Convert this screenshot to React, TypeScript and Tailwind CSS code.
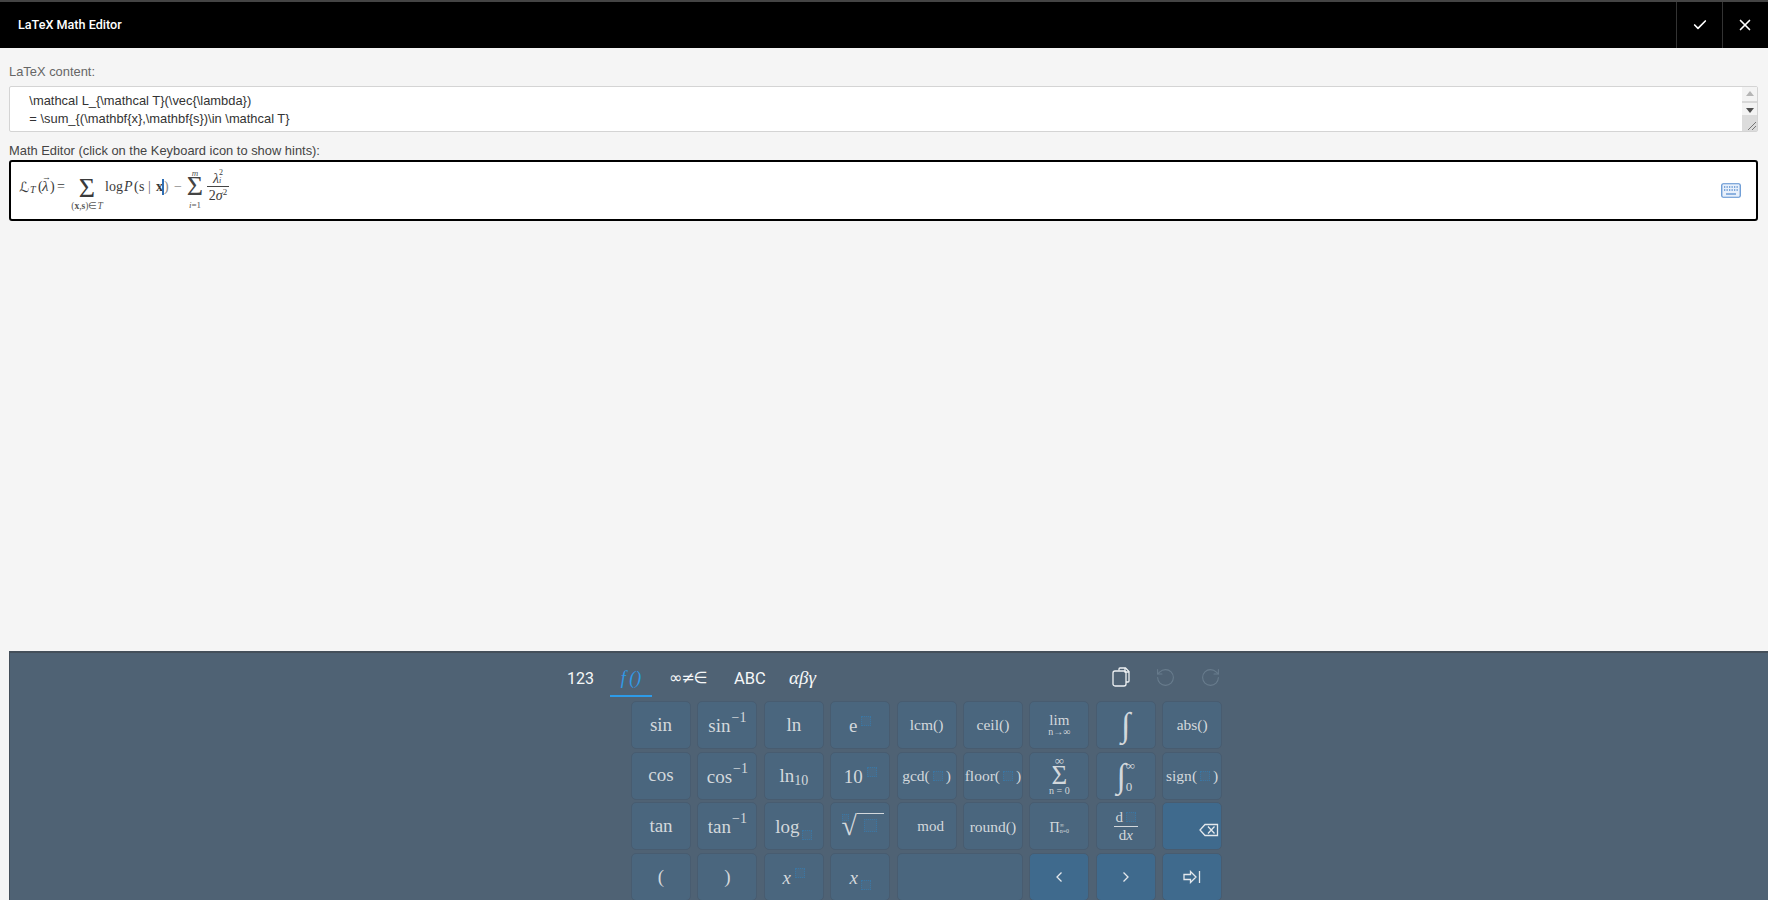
import React from "react";
import { Check, X, RotateCcw, RotateCw } from "lucide-react";

const Ph = ({ s = 10 }: { s?: number }) => (
  <span
    className="inline-block border border-dotted border-[#3a76a3] bg-[#4a6a85]"
    style={{ width: s, height: s }}
  />
);

const Key = ({ children, action, cls = "" }: { children?: React.ReactNode; action?: boolean; cls?: string }) => (
  <div
    className={`flex h-[48px] items-center justify-center rounded-[5px] border border-[#485c70] text-[#d3d8dc] ${
      action ? "bg-[#3f6a8d]" : "bg-[#4a667e]"
    } ${cls}`}
  >
    {children}
  </div>
);

const Pow = ({ base, sup }: { base: React.ReactNode; sup: React.ReactNode }) => (
  <span className="flex items-start text-[19px] leading-none">
    <span className="mt-[1px]">{base}</span>
    <span className="-mt-[4px] ml-[1px] text-[14px]">{sup}</span>
  </span>
);

const Fn = ({ name }: { name: string }) => (
  <span className="flex items-center text-[15.500px] leading-none">
    {name}(
    <span className="mx-[3px] flex">
      <Ph />
    </span>
    )
  </span>
);

const T = ({ children }: { children: React.ReactNode }) => <span className="-translate-y-[1px] text-[19px] leading-none">{children}</span>;
const S = ({ children }: { children: React.ReactNode }) => <span className="text-[15.500px] leading-none">{children}</span>;

function Keyboard() {
  return (
    <div className="mt-auto ml-[9px] h-[249px] shrink-0 overflow-hidden border-t-2 border-l border-[#444f5a] bg-[#4f6274] pl-[557px]">
      <div className="w-[655px]">
        <div className="flex h-[48px] items-center text-[#f5f7f8]">
          <span className="mt-[4px] w-[43px] font-['Roboto',sans-serif] text-[16px]">123</span>
          <span className="relative mt-[2px] flex h-[37px] w-[42px] items-center justify-center font-['Liberation_Serif',serif] text-[18px] italic text-[#2f9ae8]">
            f&thinsp;()
            <span className="absolute bottom-0 left-0 h-[2px] w-full bg-[#2d9be8]" />
          </span>
          <span className="ml-[17px] mt-[2px] w-[65px] font-['DejaVu_Sans',sans-serif] text-[16px] tracking-[-1px]">∞≠∈</span>
          <span className="mt-[4px] w-[55px] font-['Roboto',sans-serif] text-[16.500px]">ABC</span>
          <span className="mt-[2px] font-['Liberation_Serif',serif] text-[19px] italic">αβγ</span>
          <div className="ml-auto flex items-center gap-[24px] pr-[1px]">
            <svg width="20" height="20" viewBox="0 0 20 20" fill="none" stroke="#eef1f3" strokeWidth="1.3">
              <path d="M8 3.500V2a1 1 0 0 1 1-1h5.500l3.500 3.500V14a1 1 0 0 1-1 1h-2" />
              <path d="M14 1v4h4" />
              <rect x="2" y="4" width="13" height="15" rx="2" />
            </svg>
            <RotateCcw size={21} strokeWidth={1.2} className="text-[#687c8d]" />
            <RotateCw size={21} strokeWidth={1.2} className="text-[#687c8d]" />
          </div>
        </div>
        <div className="ml-[64px] grid grid-cols-[repeat(9,60px)] gap-x-[6.400px] gap-y-[2.700px] font-['Liberation_Serif',serif]">
          <Key><T>sin</T></Key>
          <Key><Pow base="sin" sup="−1" /></Key>
          <Key><T>ln</T></Key>
          <Key><Pow base={<span className="mr-[3px]">e</span>} sup={<span className="mt-[5px] flex"><Ph /></span>} /></Key>
          <Key><S>lcm()</S></Key>
          <Key><S>ceil()</S></Key>
          <Key>
            <span className="flex flex-col items-center leading-none">
              <span className="text-[15px] leading-[13px]">lim</span>
              <span className="text-[10px] leading-[10px]">n→∞</span>
            </span>
          </Key>
          <Key><span className="text-[34px] italic leading-none">∫</span></Key>
          <Key><S>abs()</S></Key>

          <Key><T>cos</T></Key>
          <Key><Pow base="cos" sup="−1" /></Key>
          <Key>
            <span className="flex items-end text-[19px] leading-none">
              ln<span className="translate-y-[2px] text-[14px] leading-[12px]">10</span>
            </span>
          </Key>
          <Key><Pow base={<span className="mr-[3px]">10</span>} sup={<span className="mt-[5px] flex"><Ph /></span>} /></Key>
          <Key><Fn name="gcd" /></Key>
          <Key><Fn name="floor" /></Key>
          <Key>
            <span className="flex flex-col items-center leading-none">
              <span className="text-[13px] leading-[9px]">∞</span>
              <span className="mt-[1px] text-[27px] leading-[18px]">Σ</span>
              <span className="mt-[2px] text-[10px] leading-[10px]">n = 0</span>
            </span>
          </Key>
          <Key>
            <span className="flex items-center">
              <span className="text-[34px] italic leading-none">∫</span>
              <span className="flex h-[34px] flex-col justify-between text-[13px] leading-none">
                <span>∞</span>
                <span>0</span>
              </span>
            </span>
          </Key>
          <Key><Fn name="sign" /></Key>

          <Key><T>tan</T></Key>
          <Key><Pow base="tan" sup="−1" /></Key>
          <Key>
            <span className="flex items-end text-[19px] leading-none">
              log
              <span className="ml-[3px] flex translate-y-[4px]"><Ph /></span>
            </span>
          </Key>
          <Key>
            <span className="ml-[6px] flex items-start leading-none">
              <span className="mr-[-8px] mt-[2px] flex"><Ph s={7} /></span>
              <span className="text-[28px] leading-[28px]">√</span>
              <span className="mt-[1px] flex w-[27px] justify-center border-t border-[#d3d8dc] pt-[5px]">
                <Ph s={13} />
              </span>
            </span>
          </Key>
          <Key><span className="ml-[8px] text-[15px] leading-none">mod</span></Key>
          <Key><S>round()</S></Key>
          <Key>
            <span className="mt-[4px] flex items-center text-[14px] leading-none">
              Π<span className="flex flex-col text-[6px] leading-[6px]"><span>∞</span><span>n=0</span></span>
            </span>
          </Key>
          <Key>
            <span className="flex flex-col items-center leading-none">
              <span className="flex items-center gap-[3px] text-[15px] leading-[17px]">d<Ph /></span>
              <span className="w-[24px] border-t border-[#d3d8dc]" />
              <span className="text-[15px] leading-[17px]">d<i>x</i></span>
            </span>
          </Key>
          <Key action>
            <svg className="ml-[34px] mt-[7px]" width="20" height="14" viewBox="0 0 20 14" fill="none" stroke="#e4e8ec" strokeWidth="1.3">
              <path d="M6 1.500h12.500v11H6L1 7z" />
              <path d="M9 3.500l6.500 7M15.500 3.500l-6.500 7" />
            </svg>
          </Key>

          <Key><T>(</T></Key>
          <Key><T>)</T></Key>
          <Key><Pow base={<i className="mr-[3px]">x</i>} sup={<span className="mt-[5px] flex"><Ph /></span>} /></Key>
          <Key>
            <span className="flex items-end text-[19px] leading-none">
              <i>x</i>
              <span className="ml-[3px] flex translate-y-[3px]"><Ph /></span>
            </span>
          </Key>
          <Key cls="col-span-2" />
          <Key action>
            <svg width="10" height="12" viewBox="0 0 10 12" fill="none" stroke="#e4e8ec" strokeWidth="1.3"><path d="M7.500 1.500L3 6l4.500 4.500" /></svg>
          </Key>
          <Key action>
            <svg width="10" height="12" viewBox="0 0 10 12" fill="none" stroke="#e4e8ec" strokeWidth="1.3"><path d="M2.500 1.500L7 6l-4.500 4.500" /></svg>
          </Key>
          <Key action>
            <svg width="18" height="14" viewBox="0 0 18 14" fill="none" stroke="#e4e8ec" strokeWidth="1.300">
              <path d="M1 4.500h6.500V1.500L13 7l-5.500 5.500v-3H1z" />
              <path d="M16.500 1v12" />
            </svg>
          </Key>
        </div>
      </div>
    </div>
  );
}

function Formula() {
  return (
    <div className="-mt-[8px] flex items-center whitespace-nowrap font-['Liberation_Serif',serif] text-[14px] leading-none text-[#3a3a3a]">
      <span className="w-[11px] font-['DejaVu_Sans',sans-serif] text-[14px]">ℒ</span>
      <i className="mt-[6px] w-[8px] text-[10px]">T</i>
      <span className="w-[4px]">(</span>
      <i className="relative w-[8px] text-[15px]">
        λ<span className="absolute left-0 top-[-6px] text-[9px] not-italic">→</span>
      </i>
      <span className="w-[5px]">)</span>
      <span className="ml-[2px] w-[10px]">=</span>
      <span className="ml-[3.500px] mt-[16px] flex w-[33px] flex-col items-center">
        <span className="text-[28px] leading-[18px]">Σ</span>
        <span className="mt-[4px] text-[9.500px] leading-[10px] text-[#555]">
          (<b>x</b>,<b>s</b>)∈<i>T</i>
        </span>
      </span>
      <span className="ml-[1.500px] w-[19px]">log</span>
      <i className="w-[10px]">P</i>
      <span className="w-[5px]">(</span>
      <span className="w-[6px]">s</span>
      <span className="w-[9px] text-center text-[#666]">|</span>
      <b className="relative ml-[2px] w-[8px]">
        x<span className="absolute right-0 top-[-1px] h-[16px] w-[2px] bg-[#2f6fb5]" />
      </b>
      <span className="w-[5px] text-[#888]">)</span>
      <span className="ml-[5px] w-[8px] text-[#888]">−</span>
      <span className="ml-[3px] mt-[5px] flex w-[20px] flex-col items-center">
        <i className="text-[9px] leading-[8px] text-[#555]">m</i>
        <span className="text-[28px] leading-[18px] text-[#444]">Σ</span>
        <span className="mt-[5px] text-[9px] leading-[10px] text-[#555]">
          <i>i</i>=1
        </span>
      </span>
      <span className="ml-[2px] flex w-[22px] flex-col items-center">
        <span className="flex h-[17px] items-start leading-[19px]">
          <i>λ</i>
          <span className="flex flex-col text-[8px] leading-[8px]">
            <span>2</span>
            <i>i</i>
          </span>
        </span>
        <span className="w-full border-t border-[#444]" />
        <span className="flex h-[17px] items-start leading-[18px]">
          2<i>σ</i>
          <span className="text-[9px] leading-[10px]">2</span>
        </span>
      </span>
    </div>
  );
}

export default function App() {
  return (
    <div className="flex h-[900px] w-[1768px] flex-col overflow-hidden bg-[#f5f5f5] font-['Liberation_Sans',sans-serif]">
      <header className="flex h-[48px] shrink-0 items-stretch border-t-2 border-[#444] bg-black text-white">
        <div className="flex flex-1 items-center pl-[18px] pt-[1px] font-['Roboto',sans-serif] text-[12.600px] font-medium">LaTeX Math Editor</div>
        <div className="flex w-[46px] items-center justify-center border-l border-[#333]">
          <Check size={16} strokeWidth={2.5} />
        </div>
        <div className="flex w-[46px] items-center justify-center border-l border-[#333] pr-[1px]">
          <X size={18} strokeWidth={2.2} />
        </div>
      </header>
      <main className="flex flex-col pl-[9px] pr-[10px]">
        <label className="mt-[16px] text-[12.900px] leading-[16px] text-[#666]">LaTeX content:</label>
        <div className="relative mt-[6px] h-[46px]">
          <textarea
            readOnly
            className="h-full w-full resize-none overflow-hidden rounded-[2px] border border-[#d4d4d4] bg-white px-[5px] py-[5px] text-[12.900px] leading-[18px] text-[#333] outline-none"
            value={"    \\mathcal L_{\\mathcal T}(\\vec{\\lambda})\n    = \\sum_{(\\mathbf{x},\\mathbf{s})\\in \\mathcal T}"}
          />
          <div className="absolute bottom-[1px] right-[1px] top-[1px] flex w-[15px] flex-col items-center bg-[#f3f3f3]">
            <div className="mt-[4px] h-0 w-0 border-x-[4px] border-b-[5px] border-x-transparent border-b-[#b5b5b5]" />
            <div className="mt-[5px] h-[2px] w-full bg-[#d8d8d8]" />
            <div className="mt-[5px] h-0 w-0 border-x-[4px] border-t-[5px] border-x-transparent border-t-[#505050]" />
            <div className="mt-auto flex h-[16px] w-full items-end justify-end bg-[#dcdcdc]">
              <svg width="12" height="12" viewBox="0 0 12 12" fill="none" stroke="#777" strokeWidth="1">
                <path d="M11 3l-8 8M11 7l-4 4" />
              </svg>
            </div>
          </div>
        </div>
        <label className="mt-[11px] text-[12.900px] leading-[16px] text-[#444]">Math Editor (click on the Keyboard icon to show hints):</label>
        <div className="mt-[1px] flex h-[61px] items-center justify-between rounded-[3px] border-2 border-black bg-white pl-[8px] pr-[15px]">
          <Formula />
          <svg width="20" height="15" viewBox="0 0 20 15" fill="none">
            <rect x="0.750" y="0.750" width="18.500" height="13.500" rx="1.500" fill="#e8f0fb" stroke="#5a8fd0" strokeWidth="1.200" />
            <path d="M3 4h14M3 7h14" stroke="#5a8fd0" strokeWidth="1.300" strokeDasharray="1.300 1.200" />
            <path d="M5 11h10" stroke="#5a8fd0" strokeWidth="1.300" />
          </svg>
        </div>
      </main>
      <Keyboard />
    </div>
  );
}
